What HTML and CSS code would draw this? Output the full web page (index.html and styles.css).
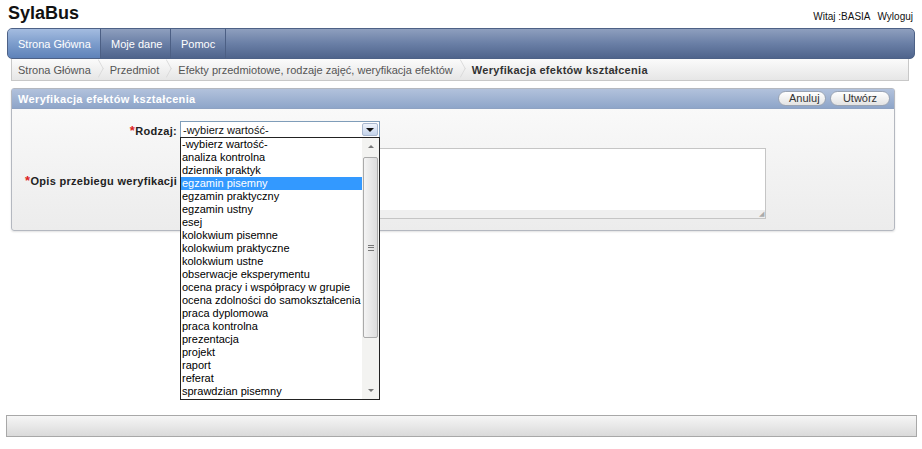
FILE: index.html
```html
<!DOCTYPE html>
<html lang="pl">
<head>
<meta charset="utf-8">
<title>SylaBus</title>
<link rel="stylesheet" href="styles.css">
</head>
<body>
<div class="top">
  <div class="logo">SylaBus</div>
  <div class="user"><span>Witaj :BASIA</span><a class="logout">Wyloguj</a></div>
</div>
<nav class="nav">
  <a class="tab active">Strona Główna</a>
  <a class="tab">Moje dane</a>
  <a class="tab">Pomoc</a>
</nav>
<div class="crumbs">
  <span class="crumb">Strona Główna</span>
  <span class="crumb">Przedmiot</span>
  <span class="crumb">Efekty przedmiotowe, rodzaje zajęć, weryfikacja efektów</span>
  <span class="crumb current">Weryfikacja efektów kształcenia</span>
</div>
<div class="panel">
  <div class="panel-head">
    <span class="panel-title">Weryfikacja efektów kształcenia</span>
    <div class="btns"><button class="btn">Anuluj</button><button class="btn">Utwórz</button></div>
  </div>
  <div class="panel-body">
    <div class="row row-select">
      <label class="lbl"><span class="req">*</span>Rodzaj:</label>
      <div class="field">
        <div class="select"><span class="sel-text">-wybierz wartość-</span><span class="sel-btn"><span class="tri-down"></span></span></div>
        <div class="listbox">
          <ul class="options">
            <li>-wybierz wartość-</li>
            <li>analiza kontrolna</li>
            <li>dziennik praktyk</li>
            <li class="hl">egzamin pisemny</li>
            <li>egzamin praktyczny</li>
            <li>egzamin ustny</li>
            <li>esej</li>
            <li>kolokwium pisemne</li>
            <li>kolokwium praktyczne</li>
            <li>kolokwium ustne</li>
            <li>obserwacje eksperymentu</li>
            <li>ocena pracy i współpracy w grupie</li>
            <li>ocena zdolności do samokształcenia</li>
            <li>praca dyplomowa</li>
            <li>praca kontrolna</li>
            <li>prezentacja</li>
            <li>projekt</li>
            <li>raport</li>
            <li>referat</li>
            <li>sprawdzian pisemny</li>
          </ul>
          <div class="vscroll">
            <div class="sb-arrow up"><span class="tri-up-s"></span></div>
            <div class="sb-track"><div class="sb-thumb"><span class="grip"></span></div></div>
            <div class="sb-arrow down"><span class="tri-down-s"></span></div>
          </div>
        </div>
      </div>
    </div>
    <div class="row row-text">
      <label class="lbl"><span class="req">*</span>Opis przebiegu weryfikacji</label>
      <div class="field"><div class="textarea"><span class="resize">◢</span></div></div>
    </div>
  </div>
</div>
<div class="footer"></div>
</body>
</html>
```
FILE: styles.css
```css
* { box-sizing: border-box; }
body {
  margin: 0;
  background: #fff;
  font-family: "Liberation Sans", Arial, sans-serif;
  font-size: 11px;
  color: #222;
}
.top {
  display: flex;
  justify-content: space-between;
  align-items: flex-start;
  height: 28px;
  padding: 2px 9px 0 8px;
}
.logo {
  font-weight: bold;
  font-size: 18px;
  line-height: 22px;
  color: #111;
}
.user {
  display: flex;
  gap: 7px;
  font-size: 10px;
  margin-top: 9px;
  color: #111;
}
.nav {
  display: flex;
  height: 31px;
  margin: 0 7px;
  border: 1px solid #4d6186;
  border-radius: 5px;
  background: linear-gradient(#8e9fbe, #6a7fa6 50%, #4f648c);
  overflow: hidden;
}
.tab {
  display: flex;
  align-items: center;
  flex-shrink: 0;
  white-space: nowrap;
  padding: 0 10px;
  color: #fff;
  font-size: 11px;
  border-right: 1px solid #4c5f84;
}
.tab.active {
  background: linear-gradient(#a4bce0, #7d9dcc 50%, #5e82b9);
  width: 93px;
}
.tab:nth-child(2) { width: 70px; }
.crumbs {
  display: flex;
  align-items: center;
  height: 22px;
  margin: 0 13px 0 11px;
  border: 1px solid #c8c8c8;
  border-top: none;
  background: linear-gradient(#fbfbfb, #e6e6e6);
  padding-left: 6px;
  color: #555;
  white-space: nowrap;
}
.crumb {
  position: relative;
  padding-right: 19px;
}
.crumb::after {
  content: "";
  position: absolute;
  right: 5px;
  top: -2px;
  width: 12px;
  height: 12px;
  border-top: 1px solid #d6d6d6;
  border-right: 1px solid #d6d6d6;
  transform: scaleX(0.55) rotate(45deg);
}
.crumb.current {
  font-weight: bold;
  color: #333;
  letter-spacing: 0.3px;
}
.crumb.current::after { display: none; }
.panel {
  margin: 7px 27px 0 11px;
  border: 1px solid #b4b8c0;
  border-radius: 3px;
  box-shadow: 0 1px 2px rgba(0,0,0,0.12);
  background: linear-gradient(#fbfbfb, #ececec);
}
.panel-head {
  display: flex;
  justify-content: space-between;
  align-items: center;
  height: 20px;
  padding: 0 4px 0 6px;
  background: linear-gradient(#b2c2dc, #8ea5c9);
  border-bottom: 1px solid #8ea2c2;
}
.panel-title {
  color: #fff;
  font-weight: bold;
  letter-spacing: 0.35px;
}
.btns { display: flex; gap: 4px; }
.btn {
  font-family: "Liberation Sans", Arial, sans-serif;
  font-size: 11px;
  color: #333;
  height: 15px;
  padding: 0 10px;
  border: 1px solid #9aa4b4;
  border-radius: 8px;
  background: linear-gradient(#ffffff, #e3e3e3);
  line-height: 13px;
}
.btn:first-child { width: 48px; }
.btn:last-child { width: 60px; }
.panel-body {
  height: 121px;
  padding-top: 12px;
}
.row { display: flex; }
.lbl {
  display: flex;
  justify-content: flex-end;
  align-items: flex-start;
  flex-shrink: 0;
  width: 168px;
  padding-right: 3px;
  font-weight: bold;
  font-size: 11px;
  color: #222;
  letter-spacing: 0.3px;
  white-space: nowrap;
}
.req { color: #d22; font-size: 13px; line-height: 11px; }
.row-select .lbl { padding-top: 4px; }
.row-text { margin-top: 10px; }
.row-text .lbl { padding-top: 27px; }
.field { position: relative; }
.select {
  position: relative;
  width: 200px;
  height: 17px;
  border: 1px solid #7f9db9;
  background: #fff;
  display: flex;
  align-items: center;
  padding-left: 2px;
  font-size: 11px;
  color: #111;
}
.sel-btn {
  position: absolute;
  right: 1px;
  top: 1px;
  width: 16px;
  height: 13px;
  border: 1px solid #a9b8cf;
  border-radius: 2px;
  background: linear-gradient(#eef3fb, #c4d3ea);
  display: flex;
  align-items: center;
  justify-content: center;
}
.tri-down {
  width: 0; height: 0;
  border-left: 4px solid transparent;
  border-right: 4px solid transparent;
  border-top: 4px solid #111;
}
.listbox {
  position: absolute;
  left: 0;
  top: 16px;
  width: 200px;
  height: 263px;
  border: 1px solid #222;
  background: #fff;
  display: flex;
  z-index: 5;
}
.options {
  list-style: none;
  margin: 0;
  padding: 0;
  flex: 1;
}
.options li {
  height: 13px;
  line-height: 13px;
  padding-left: 1px;
  font-size: 11px;
  color: #000;
  white-space: nowrap;
}
.options li.hl { background: #3399ff; color: #fff; }
.vscroll {
  width: 17px;
  display: flex;
  flex-direction: column;
  background: #f3f3f1;
}
.sb-arrow {
  height: 17px;
  display: flex;
  align-items: center;
  justify-content: center;
}
.tri-up-s, .tri-down-s {
  width: 0; height: 0;
  border-left: 3px solid transparent;
  border-right: 3px solid transparent;
}
.tri-up-s { border-bottom: 3px solid #777; }
.tri-down-s { border-top: 3px solid #777; }
.sb-track { flex: 1; padding: 2px 0 44px 0; }
.sb-thumb {
  height: 100%;
  margin: 0 1px;
  border: 1px solid #aaa;
  border-radius: 2px;
  background: linear-gradient(90deg, #f4f4f4, #dcdcdc);
  display: flex;
  align-items: center;
  justify-content: center;
}
.grip {
  width: 6px;
  height: 6px;
  border-top: 1px solid #777;
  border-bottom: 1px solid #777;
  position: relative;
}
.grip::after {
  content: "";
  position: absolute;
  left: 0; right: 0; top: 1px;
  border-top: 1px solid #777;
}
.textarea {
  position: relative;
  width: 586px;
  height: 71px;
  border: 1px solid #c5c5c5;
  background: linear-gradient(#fff 88%, #efefef 88%);
}
.resize {
  position: absolute;
  right: 1px;
  bottom: 0;
  font-size: 7px;
  color: #aaa;
}
.footer {
  height: 22px;
  margin: 184px 5px 0 6px;
  border: 1px solid #a8a8a8;
  background: linear-gradient(#f6f6f6, #dadada);
}
```
